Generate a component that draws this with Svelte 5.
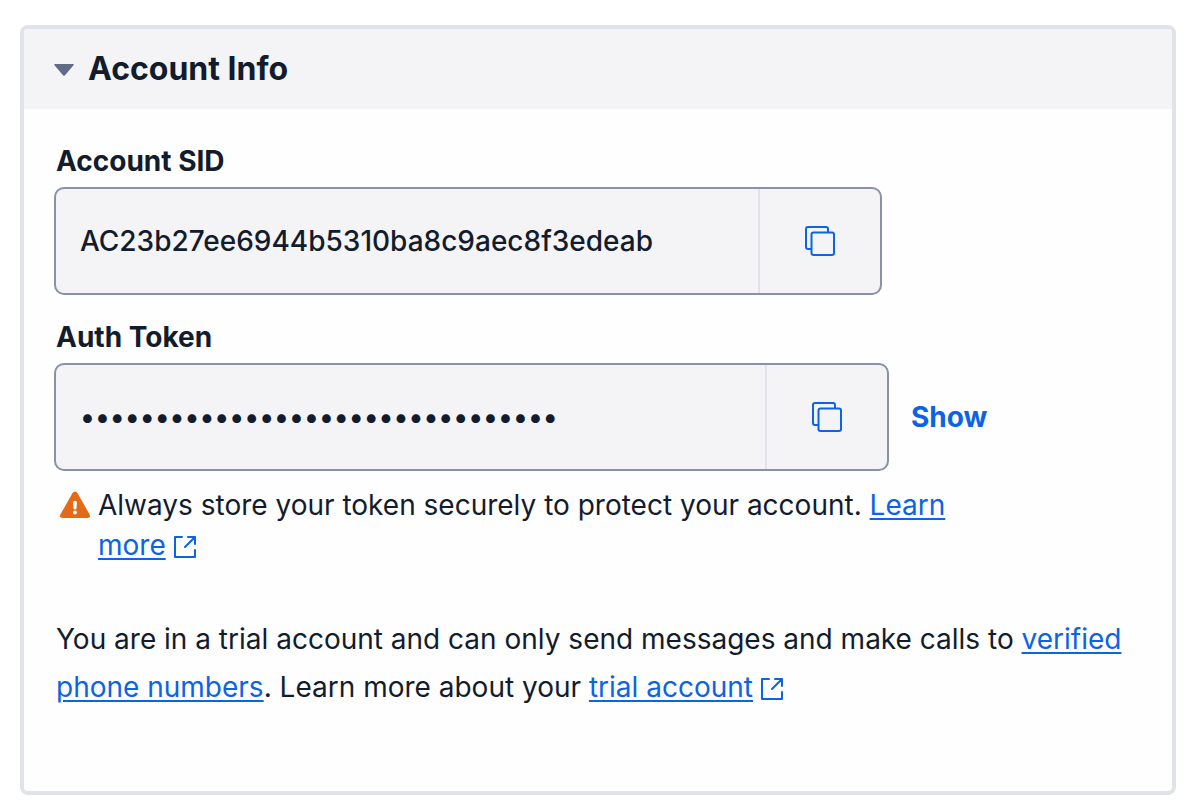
<script>
  let open = $state(true);
  let visible = $state(false);
  const sid = 'AC23b27ee6944b5310ba8c9aec8f3edeab';
  const token = '0123456789abcdef0123456789abcdef';

  function copy(text) {
    navigator.clipboard?.writeText(text);
  }
</script>

{#snippet copyIcon()}
  <svg width="30" height="30" viewBox="0 0 30 30" fill="none" stroke="currentColor" stroke-width="2" aria-hidden="true">
    <path d="M6 23H3a2 2 0 0 1-2-2V3a2 2 0 0 1 2-2h18a2 2 0 0 1 2 2v3" />
    <rect x="6.500" y="6.500" width="22.500" height="22.500" rx="2" />
  </svg>
{/snippet}

{#snippet externalIcon()}
  <svg class="external" width="22" height="22" viewBox="0 0 22 22" fill="none" stroke="currentColor" stroke-width="2" stroke-linecap="round" stroke-linejoin="round" aria-hidden="true">
    <path d="M8 1H1v20h20v-7M14 1h7v7M21 1L11 11" />
  </svg>
{/snippet}

<section class="card">
  <h2>
    <button class="toggle" type="button" aria-expanded={open} onclick={() => (open = !open)}>
      <svg class:closed={!open} width="20" height="14" viewBox="0 -2 20 14" fill="currentColor" aria-hidden="true">
        <path d="M1 0h18c1 0 1 .8.5 1.300L11 11.300q-1 1-2 0L.5 1.300C0 .8 0 0 1 0z" />
      </svg>
      Account Info
    </button>
  </h2>
  {#if open}
    <div class="body">
      <label for="sid">Account SID</label>
      <div class="row">
        <div class="field">
          <input id="sid" type="text" readonly value={sid} />
          <button class="copy" type="button" aria-label="Copy" onclick={() => copy(sid)}>{@render copyIcon()}</button>
        </div>
      </div>

      <label for="token">Auth Token</label>
      <div class="row">
        <div class="field wide">
          <input id="token" type={visible ? 'text' : 'password'} readonly value={token} />
          <button class="copy" type="button" aria-label="Copy" onclick={() => copy(token)}>{@render copyIcon()}</button>
        </div>
        <button class="show" type="button" onclick={() => (visible = !visible)}>{visible ? 'Hide' : 'Show'}</button>
      </div>

      <div class="help">
        <svg width="32" height="28" viewBox="0 0 32 28" aria-hidden="true">
          <path fill="#e36a17" d="M13.400 2.300Q16-1.200 18.600 2.300L30.600 23.500Q32 26.800 28.500 27h-25Q0 26.800 1.400 23.500z" />
          <path fill="#fff" d="M14 12q0-2.200 2-2.200t2 2.200l-.6 5.200q-.2 1.300-1.400 1.300t-1.400-1.300z" />
          <circle cx="16" cy="21.500" r="1.900" fill="#fff" />
        </svg>
        <p>Always store your token securely to protect your account. <a href="#learn">Learn more</a> {@render externalIcon()}</p>
      </div>

      <p class="trial">You are in a trial account and can only send messages and make calls to <a href="#verified">verified phone numbers</a>. Learn more about your <a href="#trial">trial account</a> {@render externalIcon()}</p>
    </div>
  {/if}
</section>

<style>
  :global(body) {
    background: #fff;
  }
  .card {
    margin: 25px 18px 11px 20px;
    border: 4px solid #e0e3e9;
    border-radius: 8px;
    background: #fefefe;
    color: #121c2d;
    font: 400 28px/40px Inter, sans-serif;
  }
  h2,
  p {
    margin: 0;
  }
  button,
  input {
    font: inherit;
    color: inherit;
    background: none;
    border: 0;
    padding: 0;
  }
  button {
    cursor: pointer;
  }
  .toggle {
    display: flex;
    align-items: center;
    gap: 14px;
    width: 100%;
    height: 80px;
    padding: 0 30px;
    background: #f4f4f6;
    font-size: 32px;
    font-weight: 700;
    border-radius: 4px 4px 0 0;
  }
  .toggle svg {
    color: #606b85;
  }
  .toggle .closed {
    transform: rotate(-90deg);
  }
  .body {
    padding: 36px 30px 80px;
  }
  label {
    display: block;
    padding: 0 2px 10px;
    line-height: 32px;
    font-weight: 700;
  }
  .row {
    display: flex;
    align-items: center;
    gap: 22px;
  }
  .row + label {
    margin-top: 26px;
  }
  .field {
    display: flex;
    flex: 0 1 828px;
    min-width: 0;
    height: 108px;
    box-sizing: border-box;
    border: 2px solid #8891aa;
    border-radius: 10px;
    background: #f4f4f6;
    overflow: hidden;
  }
  .wide {
    flex-basis: 835px;
  }
  input {
    flex: 1;
    min-width: 0;
    padding: 0 24px;
    font-weight: 500;
    outline: 0;
  }
  .copy {
    display: grid;
    place-items: center;
    width: 122px;
    box-sizing: border-box;
    border-left: 2px solid #e1e3ea;
    color: #0b63e5;
  }
  .show {
    color: #0b63e5;
    font-weight: 700;
  }
  .help {
    display: flex;
    align-items: flex-start;
    gap: 7px;
    max-width: 900px;
    margin-top: 14px;
    padding-left: 5px;
  }
  .help > svg {
    flex: none;
    margin-top: 6px;
  }
  a {
    color: #0b63e5;
    text-decoration-thickness: 2px;
    text-underline-offset: 3px;
  }
  p :global(.external) {
    color: #0b63e5;
    vertical-align: -3px;
  }
  .trial {
    margin-top: 50px;
    padding: 0 2px;
    line-height: 48px;
  }
</style>
